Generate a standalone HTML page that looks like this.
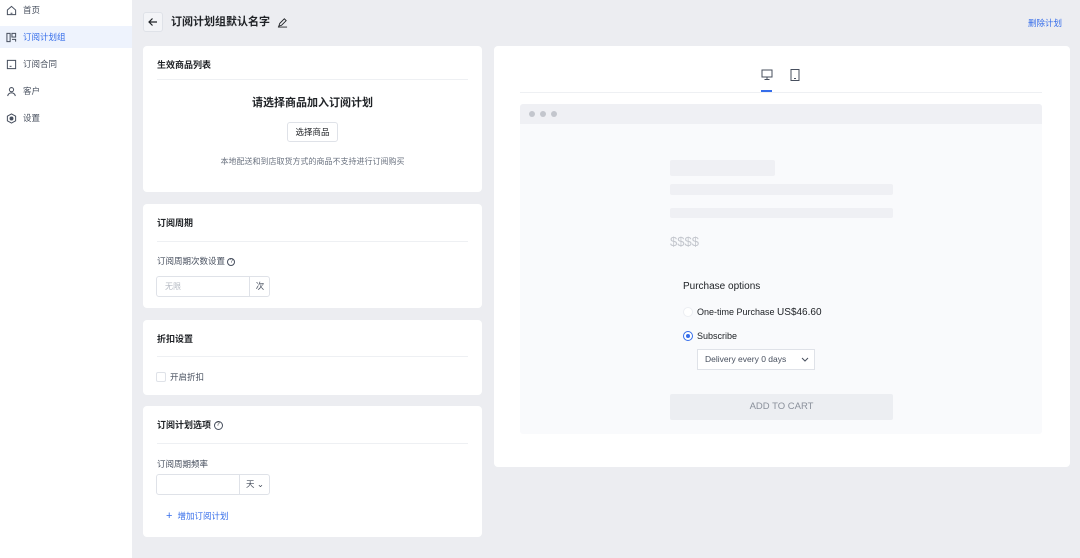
<!DOCTYPE html>
<html><head><meta charset="utf-8"><style>
*{margin:0;padding:0;box-sizing:border-box}
html{width:1080px;height:558px;overflow:hidden}
body{width:1080px;height:558px;overflow:hidden;background:#ecedf1;font-family:"Liberation Sans","Noto Sans CJK SC",sans-serif;color:#202327;position:relative;font-size:12px}
.abs{position:absolute}
.side{left:0;top:0;width:132px;height:558px;background:#fff}
.nav{position:absolute;left:0;width:132px;height:22px;font-size:8.5px;color:#474f5e;display:flex;align-items:center;padding-left:6px}
.nav svg{margin-right:6px}
.nav.act{background:#eef3fd;color:#356dea}
.card{position:absolute;background:#fff;border-radius:4px}
.h{position:absolute;left:14px;font-size:9px;font-weight:bold;color:#202327}
.line{position:absolute;left:14px;right:14px;height:1px;background:#eef0f3}
.t9{font-size:8.5px;color:#474f5e}
.inp{position:absolute;border:1px solid #dfe2e8;border-radius:3px;background:#fff}
</style></head><body>
<div class="abs side">
 <div class="nav" style="top:-1px"><svg width="11" height="11" viewBox="0 0 12 12" fill="none" stroke="#474f5e" stroke-width="1.1"><path d="M1.5 5.5L6 1.5l4.5 4v5h-9z"/><path d="M5 9h2"/></svg>首页</div>
 <div class="nav act" style="top:26px"><svg width="11" height="11" viewBox="0 0 12 12" fill="none" stroke="#474f5e" stroke-width="1.1"><rect x="1" y="1.5" width="3.5" height="9"/><rect x="6.5" y="1.5" width="4" height="4"/><path d="M6.5 8h4v2.5"/></svg>订阅计划组</div>
 <div class="nav" style="top:53px"><svg width="11" height="11" viewBox="0 0 12 12" fill="none" stroke="#474f5e" stroke-width="1.1"><rect x="1.5" y="1.5" width="9" height="9"/><path d="M4 8h2"/></svg>订阅合同</div>
 <div class="nav" style="top:80px"><svg width="11" height="11" viewBox="0 0 12 12" fill="none" stroke="#474f5e" stroke-width="1.1"><circle cx="6" cy="4" r="2.3"/><path d="M1.8 11c.5-2.5 2.2-3.5 4.2-3.5s3.7 1 4.2 3.5"/></svg>客户</div>
 <div class="nav" style="top:107px"><svg width="11" height="11" viewBox="0 0 12 12" fill="none" stroke="#474f5e" stroke-width="1.1"><path d="M6 1l4.5 2.5v5L6 11 1.5 8.5v-5z"/><circle cx="6" cy="6" r="1.6" fill="#474f5e"/></svg>设置</div>
</div>

<div class="abs" style="left:143px;top:12px;width:20px;height:20px;border:1px solid #dfe2e8;border-radius:3px;background:#f3f4f7"><svg width="18" height="18" viewBox="0 0 18 18" fill="none" stroke="#202327" stroke-width="1.2"><path d="M13 9H5M8.5 5.5L5 9l3.5 3.5"/></svg></div>
<div class="abs" style="left:171px;top:14px;font-size:11px;font-weight:bold;line-height:16px">订阅计划组默认名字</div>
<svg class="abs" style="left:277px;top:17px" width="11" height="11" viewBox="0 0 12 12" fill="none" stroke="#202327" stroke-width="1"><path d="M2 10l1-3 5-5 2 2-5 5zM1 11h10"/></svg>
<div class="abs" style="left:1028px;top:17px;font-size:8.5px;color:#356dea">删除计划</div>

<div class="card" style="left:143px;top:46px;width:339px;height:146px">
 <div class="h" style="top:12px">生效商品列表</div>
 <div class="line" style="top:33px"></div>
 <div class="abs" style="left:0;width:339px;top:48px;text-align:center;font-size:11px;font-weight:bold">请选择商品加入订阅计划</div>
 <div class="abs" style="left:144px;top:76px;width:51px;height:20px;border:1px solid #dfe2e8;border-radius:3px;font-size:8.5px;text-align:center;line-height:18px">选择商品</div>
 <div class="abs t9" style="left:0;width:339px;top:110px;text-align:center;font-size:8px;color:#6b7380">本地配送和到店取货方式的商品不支持进行订阅购买</div>
</div>

<div class="card" style="left:143px;top:204px;width:339px;height:104px">
 <div class="h" style="top:12px">订阅周期</div>
 <div class="line" style="top:37px"></div>
 <div class="abs t9" style="left:14px;top:51px">订阅周期次数设置 <span style="display:inline-block;width:8px;height:8px;border:1px solid #474f5e;border-radius:50%;font-size:6px;line-height:6px;text-align:center;vertical-align:middle">?</span></div>
 <div class="inp" style="left:13px;top:72px;width:114px;height:21px"><span style="position:absolute;left:8px;top:4px;font-size:8px;color:#b4b9c2">无限</span><div style="position:absolute;left:92px;top:0;bottom:0;border-left:1px solid #dfe2e8;width:21px;text-align:center;line-height:19px;font-size:8.5px;color:#474f5e">次</div></div>
</div>

<div class="card" style="left:143px;top:320px;width:339px;height:75px">
 <div class="h" style="top:12px">折扣设置</div>
 <div class="line" style="top:36px"></div>
 <div class="abs" style="left:13px;top:52px;width:10px;height:10px;border:1px solid #dfe2e8;border-radius:2px"></div>
 <div class="abs t9" style="left:27px;top:51px">开启折扣</div>
</div>

<div class="card" style="left:143px;top:406px;width:339px;height:131px">
 <div class="h" style="top:12px">订阅计划选项 <span style="display:inline-block;width:9px;height:9px;border:1px solid #474f5e;border-radius:50%;font-size:6px;line-height:7px;text-align:center;vertical-align:middle;font-weight:normal">?</span></div>
 <div class="line" style="top:37px"></div>
 <div class="abs t9" style="left:14px;top:52px">订阅周期频率</div>
 <div class="inp" style="left:13px;top:68px;width:114px;height:21px"><div style="position:absolute;left:82px;top:0;bottom:0;border-left:1px solid #dfe2e8;width:31px;text-align:center;line-height:19px;font-size:8.5px;color:#474f5e">天 ⌄</div></div>
 <div class="abs" style="left:23px;top:104px;font-size:8.5px;color:#356dea"><span style="font-size:11px;margin-right:5px">+</span>增加订阅计划</div>
</div>

<div class="card" style="left:494px;top:46px;width:576px;height:421px">
 <svg class="abs" style="left:267px;top:23px" width="12" height="12" viewBox="0 0 12 12" fill="none" stroke="#474f5e" stroke-width="1"><rect x="1" y="1" width="10" height="7"/><path d="M6 8v2.5M3.5 10.5h5"/></svg>
 <svg class="abs" style="left:296px;top:23px" width="10" height="12" viewBox="0 0 10 12" fill="none" stroke="#474f5e" stroke-width="1"><rect x="1" y="0.5" width="8" height="11"/><path d="M4 9.5h2"/></svg>
 <div class="abs" style="left:267px;top:44px;width:11px;height:2px;background:#356dea"></div>
 <div class="abs" style="left:26px;right:28px;top:46px;height:1px;background:#eef0f3"></div>
 <div class="abs" style="left:26px;top:58px;width:522px;height:330px;background:#f9fafc;border-radius:3px;overflow:hidden">
  <div style="height:20px;background:#eff0f4;position:relative">
   <span style="position:absolute;left:9px;top:7px;width:6px;height:6px;border-radius:50%;background:#c3c6cd"></span>
   <span style="position:absolute;left:20px;top:7px;width:6px;height:6px;border-radius:50%;background:#c3c6cd"></span>
   <span style="position:absolute;left:31px;top:7px;width:6px;height:6px;border-radius:50%;background:#c3c6cd"></span>
  </div>
  <div class="abs" style="left:150px;top:56px;width:105px;height:16px;background:#eff0f4;border-radius:2px"></div>
  <div class="abs" style="left:150px;top:80px;width:223px;height:11px;background:#eff0f4;border-radius:2px"></div>
  <div class="abs" style="left:150px;top:104px;width:223px;height:10px;background:#eff0f4;border-radius:2px"></div>
  <div class="abs" style="left:150px;top:130px;font-size:13px;color:#c3c6cd">$$$$</div>
  <div class="abs" style="left:163px;top:177px;font-size:10px;color:#202327">Purchase options</div>
  <div class="abs" style="left:163px;top:203px;width:10px;height:10px;border:1px solid #eceef2;border-radius:50%;background:#fff"></div>
  <div class="abs" style="left:177px;top:203px;font-size:9px">One-time Purchase <span style="font-size:10px">US$46.60</span></div>
  <div class="abs" style="left:163px;top:227px;width:10px;height:10px;border:1px solid #356dea;border-radius:50%;background:#fff"><span style="position:absolute;left:2px;top:2px;width:4px;height:4px;border-radius:50%;background:#356dea"></span></div>
  <div class="abs" style="left:177px;top:227px;font-size:9px">Subscribe</div>
  <div class="abs" style="left:177px;top:245px;width:118px;height:21px;border:1px solid #dfe2e8;background:#fff;font-size:8.5px;color:#474f5e;line-height:19px;padding-left:7px">Delivery every 0 days<svg style="position:absolute;right:5px;top:7px" width="8" height="5" viewBox="0 0 8 5" fill="none" stroke="#474f5e"><path d="M1 1l3 3 3-3"/></svg></div>
  <div class="abs" style="left:150px;top:290px;width:223px;height:26px;background:#eceef2;border-radius:2px;text-align:center;line-height:26px;font-size:9.5px;color:#8a909b">ADD TO CART</div>
 </div>
</div>
</body></html>
